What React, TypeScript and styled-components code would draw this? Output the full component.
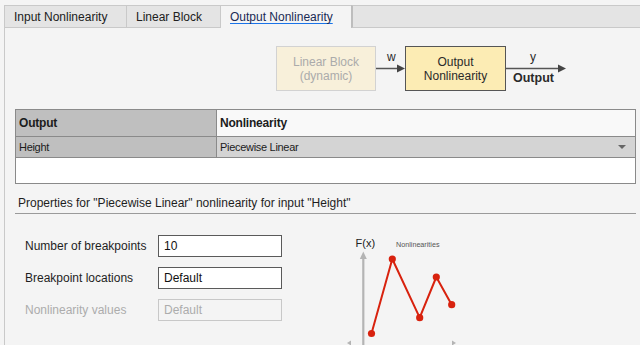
import React from "react";
import styled, { createGlobalStyle } from "styled-components";

const Global = createGlobalStyle`
  html, body { margin: 0; padding: 0; }
  body {
    width: 640px; height: 345px; overflow: hidden;
    background: #f4f4f4;
    font-family: "Liberation Sans", Arial, sans-serif;
    font-size: 12px; color: #222;
  }
`;

const Page = styled.div`
  padding: 5px 0 0 4px;
  height: 340px;
  display: flex;
  flex-direction: column;
`;

const TabStrip = styled.div`
  display: flex;
  height: 23px;
  flex: none;
`;

const Tab = styled.div<{ $w?: number; $active?: boolean }>`
  width: ${(p) => (p.$w ? `${p.$w}px` : "auto")};
  box-sizing: border-box;
  border-top: 1px solid #c9c9c9;
  border-left: 1px solid #c9c9c9;
  border-bottom: ${(p) => (p.$active ? "none" : "1px solid #c9c9c9")};
  background: ${(p) => (p.$active ? "#f4f4f4" : "#e4e4e4")};
  padding-left: 9px;
  display: flex;
  align-items: center;
  white-space: nowrap;
  color: #202020;
`;

const TabLabel = styled.span<{ $active?: boolean }>`
  text-decoration: ${(p) => (p.$active ? "underline" : "none")};
  text-decoration-color: #1a73e8;
  text-underline-offset: 2px;
  color: ${(p) => (p.$active ? "#1a2a55" : "#202020")};
`;

const TabFiller = styled.div`
  flex: 1;
  box-sizing: border-box;
  border-top: 1px solid #c9c9c9;
  border-left: 2px solid #bdbdbd;
  border-bottom: 1px solid #c9c9c9;
  background: #e4e4e4;
`;

const Panel = styled.div`
  flex: 1;
  border-left: 1px solid #c9c9c9;
  padding: 0 4px 0 10px;
  display: flex;
  flex-direction: column;
`;

const Diagram = styled.div`
  display: flex;
  height: 45px;
  padding: 18px 0 18px 261px;
`;

const Block = styled.div<{ $dim?: boolean; $w: number }>`
  width: ${(p) => p.$w}px;
  height: 45px;
  box-sizing: border-box;
  border: 1px solid ${(p) => (p.$dim ? "#d2d2d2" : "#555")};
  background: ${(p) => (p.$dim ? "#f8f0da" : "#fcecb4")};
  color: ${(p) => (p.$dim ? "#ababab" : "#2a2a2a")};
  display: flex;
  flex-direction: column;
  align-items: center;
  justify-content: center;
  line-height: 14px;
  text-align: center;
`;

const Connector = styled.div<{ $w: number }>`
  width: ${(p) => p.$w}px;
  height: 45px;
  display: grid;
  grid-template-rows: 18px 9px 18px;
`;

const ConnLabel = styled.div<{ $top?: boolean; $bold?: boolean; $x: number }>`
  display: flex;
  align-items: ${(p) => (p.$top ? "flex-end" : "flex-start")};
  padding-left: ${(p) => p.$x}px;
  font-weight: ${(p) => (p.$bold ? "bold" : "normal")};
  font-size: ${(p) => (p.$bold ? "12.5px" : "12px")};
  line-height: 14px;
  color: #2a2a2a;
  margin-top: ${(p) => (p.$top ? "0" : "-2px")};
`;

const Arrow = ({ w }: { w: number }) => (
  <svg width={w} height={9} viewBox={`0 0 ${w} 9`}>
    <line x1={0} y1={4.5} x2={w - 6} y2={4.5} stroke="#555" strokeWidth={1.5} />
    <polygon points={`${w - 8},0.5 ${w},4.5 ${w - 8},8.5`} fill="#444" />
  </svg>
);

const Table = styled.div`
  border: 1px solid #8a8a8a;
  background: #fff;
  width: 621px;
  box-sizing: border-box;
  flex: none;
`;

const Row = styled.div<{ $h: number }>`
  display: grid;
  grid-template-columns: 201px 1fr;
  height: ${(p) => p.$h}px;
  border-bottom: 1px solid #8a8a8a;
`;

const Cell = styled.div<{ $bg: string; $head?: boolean; $first?: boolean }>`
  background: ${(p) => p.$bg};
  border-right: ${(p) => (p.$first ? "1px solid #8a8a8a" : "none")};
  display: flex;
  align-items: center;
  justify-content: space-between;
  padding: 0 10px 0 3px;
  font-weight: ${(p) => (p.$head ? "bold" : "normal")};
  font-size: ${(p) => (p.$head ? "12px" : "11px")};
  letter-spacing: ${(p) => (p.$head ? "-0.2px" : "-0.3px")};
  color: #1c1c1c;
`;

const Caret = styled.span`
  width: 0;
  height: 0;
  border-left: 4px solid transparent;
  border-right: 4px solid transparent;
  border-top: 4px solid #666;
  margin-right: -1px;
`;

const EmptyArea = styled.div`
  height: 25px;
`;

const SectionTitle = styled.div`
  margin-top: 12px;
  width: 621px;
  box-sizing: border-box;
  padding: 0 3px 2px;
  line-height: 15px;
  border-bottom: 1px solid #9a9a9a;
  color: #1e1e1e;
`;

const FormArea = styled.div`
  display: flex;
  padding: 21px 0 0 10px;
`;

const Fields = styled.div`
  display: grid;
  grid-template-columns: 133px 124px;
  grid-auto-rows: 22px;
  row-gap: 10px;
  align-items: center;
  align-self: flex-start;
`;

const Label = styled.div<{ $disabled?: boolean }>`
  color: ${(p) => (p.$disabled ? "#acacac" : "#1e1e1e")};
`;

const Field = styled.div<{ $disabled?: boolean }>`
  height: 22px;
  box-sizing: border-box;
  border: 1px solid ${(p) => (p.$disabled ? "#c8c8c8" : "#5a5a5a")};
  background: ${(p) => (p.$disabled ? "#f4f4f4" : "#fff")};
  color: ${(p) => (p.$disabled ? "#acacac" : "#111")};
  padding-left: 5px;
  display: flex;
  align-items: center;
`;

const ChartBox = styled.div`
  margin: 1px 0 0 58px;
`;

const Chart = () => {
  const pts: [number, number][] = [
    [31.5, 97.5],
    [52.3, 23],
    [79.7, 81.7],
    [96.3, 41],
    [111.7, 68.7],
  ];
  return (
    <svg width={130} height={109} viewBox="0 0 130 109" style={{ display: "block" }}>
      <text x={15.5} y={11} fontSize={11} fill="#222" fontFamily="Liberation Sans, Arial, sans-serif">
        F(x)
      </text>
      <text x={56} y={10.5} fontSize={7.2} fill="#555" fontFamily="Liberation Sans, Arial, sans-serif">
        Nonlinearities
      </text>
      <line x1={23.3} y1={20} x2={23.3} y2={112} stroke="#b4b4b4" strokeWidth={2.2} />
      <polygon points="23.3,15.5 19.8,23 26.8,23" fill="#b4b4b4" />
      <polygon points="7,107 11,104.5 11,109.5" fill="#b4b4b4" />
      <polygon points="116,107 112,104.5 112,109.5" fill="#b4b4b4" />
      <polyline
        points={pts.map((p) => p.join(",")).join(" ")}
        fill="none"
        stroke="#d8220e"
        strokeWidth={2}
        strokeLinejoin="round"
      />
      {pts.map((p, i) => (
        <circle key={i} cx={p[0]} cy={p[1]} r={3.6} fill="#d8220e" />
      ))}
    </svg>
  );
};

export default function App() {
  return (
    <>
      <Global />
      <Page>
        <TabStrip>
          <Tab $w={122}>
            <TabLabel>Input Nonlinearity</TabLabel>
          </Tab>
          <Tab $w={94}>
            <TabLabel>Linear Block</TabLabel>
          </Tab>
          <Tab $w={131} $active>
            <TabLabel $active>Output Nonlinearity</TabLabel>
          </Tab>
          <TabFiller />
        </TabStrip>
        <Panel>
          <Diagram>
            <Block $dim $w={100}>
              <span>Linear Block</span>
              <span>(dynamic)</span>
            </Block>
            <Connector $w={29}>
              <ConnLabel $top $x={11}>w</ConnLabel>
              <Arrow w={29} />
              <span />
            </Connector>
            <Block $w={101}>
              <span>Output</span>
              <span>Nonlinearity</span>
            </Block>
            <Connector $w={60}>
              <ConnLabel $top $x={24}>y</ConnLabel>
              <Arrow w={60} />
              <ConnLabel $bold $x={7}>Output</ConnLabel>
            </Connector>
          </Diagram>
          <Table>
            <Row $h={26}>
              <Cell $bg="#bfbfbf" $head $first>Output</Cell>
              <Cell $bg="#f9f9f9" $head>Nonlinearity</Cell>
            </Row>
            <Row $h={20}>
              <Cell $bg="#bfbfbf" $first>Height</Cell>
              <Cell $bg="#d4d4d4">
                <span>Piecewise Linear</span>
                <Caret />
              </Cell>
            </Row>
            <EmptyArea />
          </Table>
          <SectionTitle>
            Properties for "Piecewise Linear" nonlinearity for input "Height"
          </SectionTitle>
          <FormArea>
            <Fields>
              <Label>Number of breakpoints</Label>
              <Field>10</Field>
              <Label>Breakpoint locations</Label>
              <Field>Default</Field>
              <Label $disabled>Nonlinearity values</Label>
              <Field $disabled>Default</Field>
            </Fields>
            <ChartBox>
              <Chart />
            </ChartBox>
          </FormArea>
        </Panel>
      </Page>
    </>
  );
}
